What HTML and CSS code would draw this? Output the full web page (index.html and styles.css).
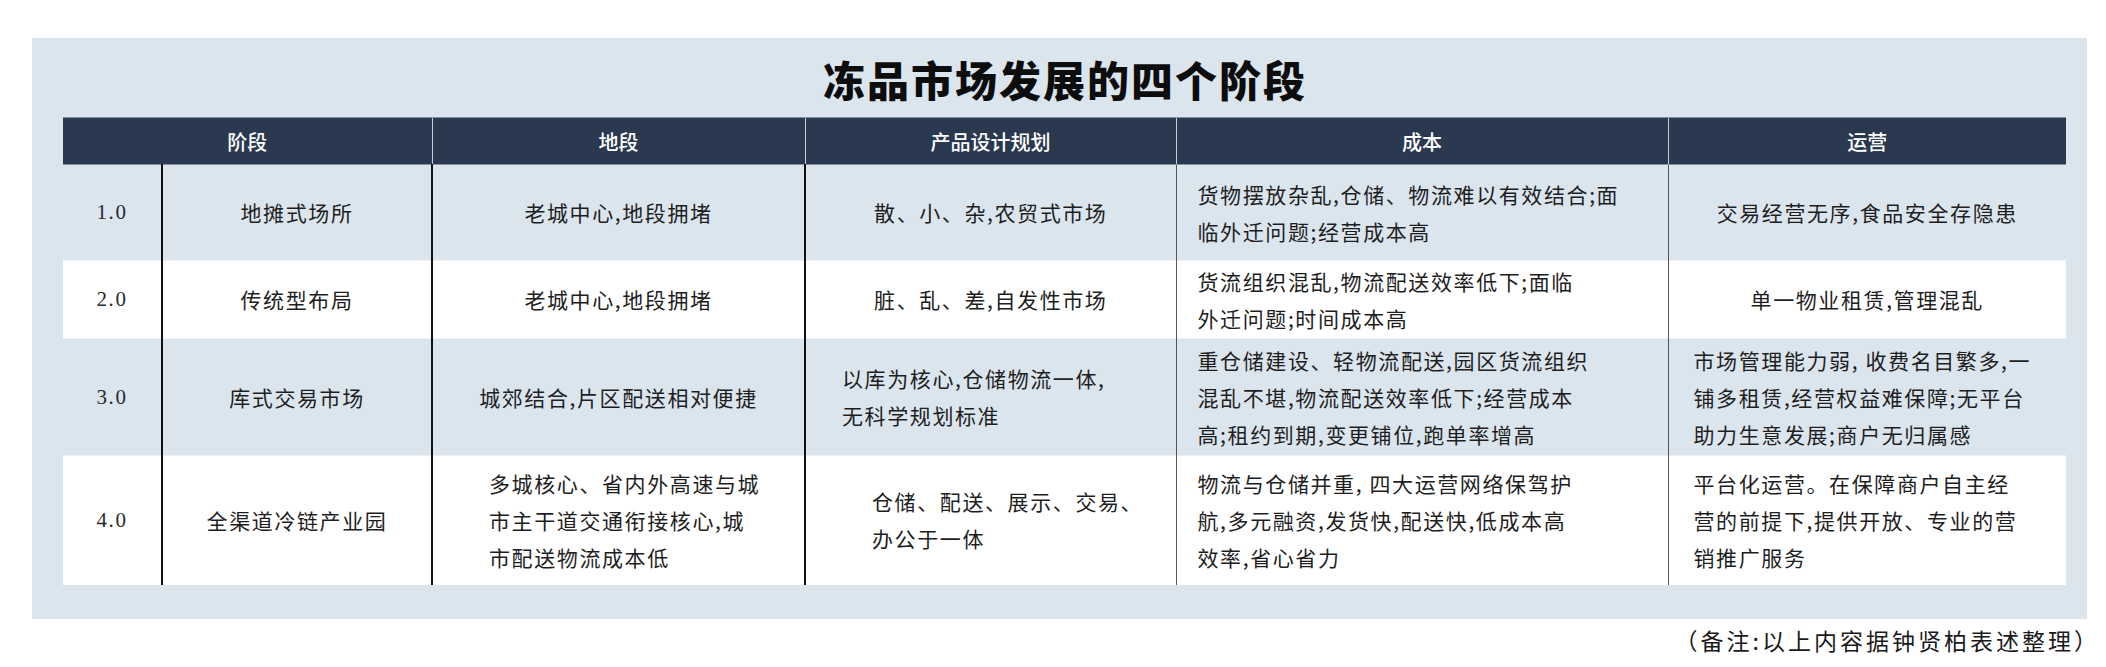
FILE: index.html
```html
<!DOCTYPE html>
<html lang="zh-CN">
<head>
<meta charset="utf-8">
<title>冻品市场发展的四个阶段</title>
<link rel="stylesheet" href="styles.css">
</head>
<body>
<div class="page">
  <section class="panel">
    <h1 class="title">冻品市场发展的四个阶段</h1>
    <table class="grid">
      <colgroup>
        <col class="c-num"><col class="c-name"><col class="c-site"><col class="c-plan"><col class="c-cost"><col class="c-op">
      </colgroup>
      <thead>
        <tr>
          <th colspan="2">阶段</th>
          <th>地段</th>
          <th>产品设计规划</th>
          <th>成本</th>
          <th>运营</th>
        </tr>
      </thead>
      <tbody>
        <tr class="r1 shade">
          <td class="num">1.0</td>
          <td class="name dark">地摊式场所</td>
          <td class="ctr dark">老城中心,地段拥堵</td>
          <td class="ctr dark">散、小、杂,农贸式市场</td>
          <td class="left pad-cost">货物摆放杂乱,仓储、物流难以有效结合;面<br>临外迁问题;经营成本高</td>
          <td class="ctr">交易经营无序,食品安全存隐患</td>
        </tr>
        <tr class="r2">
          <td class="num">2.0</td>
          <td class="name dark">传统型布局</td>
          <td class="ctr dark">老城中心,地段拥堵</td>
          <td class="ctr dark">脏、乱、差,自发性市场</td>
          <td class="left pad-cost">货流组织混乱,物流配送效率低下;面临<br>外迁问题;时间成本高</td>
          <td class="ctr">单一物业租赁,管理混乱</td>
        </tr>
        <tr class="r3 shade">
          <td class="num">3.0</td>
          <td class="name dark">库式交易市场</td>
          <td class="ctr dark">城郊结合,片区配送相对便捷</td>
          <td class="left pad-plan3 dark">以库为核心,仓储物流一体,<br>无科学规划标准</td>
          <td class="left pad-cost">重仓储建设、轻物流配送,园区货流组织<br>混乱不堪,物流配送效率低下;经营成本<br>高;租约到期,变更铺位,跑单率增高</td>
          <td class="left pad-op">市场管理能力弱, 收费名目繁多,一<br>铺多租赁,经营权益难保障;无平台<br>助力生意发展;商户无归属感</td>
        </tr>
        <tr class="r4">
          <td class="num">4.0</td>
          <td class="name dark">全渠道冷链产业园</td>
          <td class="left pad-site4 dark">多城核心、省内外高速与城<br>市主干道交通衔接核心,城<br>市配送物流成本低</td>
          <td class="left pad-plan4 dark">仓储、配送、展示、交易、<br>办公于一体</td>
          <td class="left pad-cost">物流与仓储并重, 四大运营网络保驾护<br>航,多元融资,发货快,配送快,低成本高<br>效率,省心省力</td>
          <td class="left pad-op">平台化运营。在保障商户自主经<br>营的前提下,提供开放、专业的营<br>销推广服务</td>
        </tr>
      </tbody>
    </table>
  </section>
  <p class="note">（备注:以上内容据钟贤柏表述整理）</p>
</div>
</body>
</html>
```

FILE: styles.css
```css
html, body {
  margin: 0;
  padding: 0;
  background: #ffffff;
}

body {
  font-family: "Noto Sans CJK SC", "Noto Sans", sans-serif;
  color: #1e1e1e;
}

.page {
  width: 2106px;
  padding: 38px 0 0 32px;
  box-sizing: border-box;
}

.panel {
  width: 2055px;
  box-sizing: border-box;
  background: #dbe5ee;
  padding: 0 20px 34px 31px;
}

.title {
  margin: 0;
  height: 79px;
  line-height: 82px;
  text-align: center;
  font-size: 42px;
  font-weight: 900;
  letter-spacing: 2px;
  color: #0d0d0d;
}

.grid {
  width: 2003px;
  border-collapse: collapse;
  table-layout: fixed;
}

.c-num { width: 99px; }
.c-name { width: 270px; }
.c-site { width: 373px; }
.c-plan { width: 371px; }
.c-cost { width: 492px; }
.c-op { width: 398px; }

.grid th {
  height: 46px;
  padding: 0;
  background: #2a394f;
  color: #ffffff;
  font-size: 20px;
  font-weight: 500;
  border-left: 1px solid #c3ccd6;
  border-top: 1px solid #7f8ea0;
  border-bottom: 1px solid #8593a4;
  text-align: center;
  vertical-align: middle;
}

.grid th:first-child {
  border-left: none;
}

.grid td {
  padding: 0;
  font-size: 21px;
  line-height: 37px;
  letter-spacing: 1.6px;
  vertical-align: middle;
  border-left: 1.5px solid #555;
  background: #ffffff;
}

.grid td:first-child {
  border-left: none;
}

.grid td.dark {
  border-left: 2px solid #111;
}

.grid tr.shade td {
  background: #dbe5ee;
}

.grid tbody tr + tr td {
  border-top: 1px solid #eef2f6;
}

.r1 { height: 96px; }
.r2 { height: 78px; }
.r3 { height: 117px; }
.r4 { height: 129px; }

.num {
  text-align: center;
  font-family: "Liberation Serif", "Times New Roman", serif;
  font-size: 22px;
  letter-spacing: 0;
  color: #2a2a2a;
}

.name,
.ctr {
  text-align: center;
}

.left {
  text-align: left;
}

.grid td.pad-cost { padding-left: 21px; }
.grid td.pad-op { padding-left: 25px; }
.grid td.pad-plan3 { padding-left: 36px; }
.grid td.pad-plan4 { padding-left: 66px; }
.grid td.pad-site4 { padding-left: 56px; }

.note {
  margin: 4px 0 0;
  width: 2068px;
  text-align: right;
  font-size: 23px;
  font-weight: 400;
  letter-spacing: 3px;
  color: #1a1a1a;
}
```
